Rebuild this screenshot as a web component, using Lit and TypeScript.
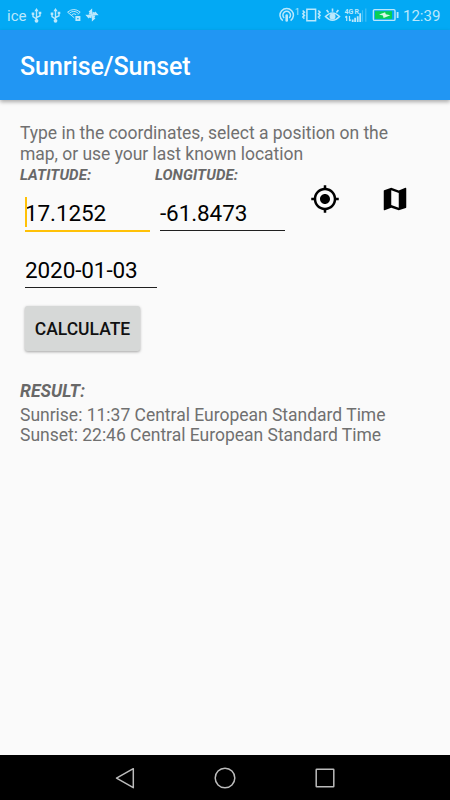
import { LitElement, html, css, svg } from "lit";
import { customElement, property, state } from "lit/decorators.js";
import { classMap } from "lit/directives/class-map.js";

const usb = svg`<svg class="usb" width="11" height="15" viewBox="0 0 11 15" fill="none" stroke="currentColor" stroke-width="1.4">
  <path d="M5.5 2.5V12M5.5 11L2 8.6V6M5.5 9.5L9 7.8V5.2"/>
  <path d="M5.5 0L7.6 3.3H3.4zM.7 4.6h2.6v2.3H.7zM7.7 3.8h2.6v2.3H7.7z" fill="currentColor" stroke="none"/>
  <circle cx="5.5" cy="12.8" r="1.9" fill="currentColor" stroke="none"/></svg>`;

@customElement("status-bar")
export class StatusBar extends LitElement {
  static styles = css`
    :host { display: flex; justify-content: space-between; align-items: center; height: 30px; box-sizing: border-box;
      padding: 0 10.5px 0 7px; background: #03a9f4; color: #bae8fc; font: 15px/30px Roboto, sans-serif; }
    .side { display: flex; align-items: center; height: 30px; }
    svg { display: block; flex: none; }
    .carrier { font-size: 15px; width: 24px; padding-top: 2px; }
    .usb { margin-right: 8px; }
    .wifi { margin-right: 4px; margin-left: -2px; }
    .clock { width: 36.5px; padding-top: 2px; white-space: nowrap; }
    .tiny { font: 700 7px "Roboto", sans-serif; fill: currentColor; }
    .one { font: 9px "Roboto", sans-serif; fill: currentColor; }
  `;
  render() {
    return html`
      <div class="side">
        <span class="carrier">ice</span>${usb}${usb}
        <svg class="wifi" width="14" height="14" viewBox="0 0 14 14" fill="none" stroke="currentColor">
          <path d="M.6 4.2Q6.8-1.2 13.2 4.2L10.7 6.5M.6 4.2L7.3 9.8M2.7 5Q6.8 1.8 11 5M4.6 6.8Q7 4.7 9.2 6.6"/>
          <path d="M9.3 9h3.2v3.2H9.3z" stroke-width="1.8"/>
        </svg>
        <svg width="14" height="14" viewBox="0 0 14 14" fill="currentColor">
          <path d="M7 7L3.6 3.6 7.2.4zM7 7l3.4-3.4 3.2 3.6zM7 7l3.4 3.4-3.6 3.2zM7 7l-3.4 3.4L.4 6.8z"/>
          <path d="M7 7L3.4 6.4 7 .6zM7 7l.6-3.6L13.4 7zM7 7l3.6.6L7 13.4zM7 7l-.6 3.6L.6 7z"/>
        </svg>
      </div>
      <div class="side">
        <svg width="88" height="20" viewBox="0 0 88 20" fill="none" stroke="currentColor" stroke-width="1.5">
          <path d="M3.8 15.6A6.7 6.7 0 1 1 11.6 15.6M5.2 13A3.8 3.8 0 1 1 10.2 13"/>
          <path d="M7.7 10.5v5" stroke-width="2.6" stroke-linecap="round"/>
          <text class="one" x="15.8" y="9.8" stroke="none">1</text>
          <path d="M27.9 4.3h8.7v11.4h-8.7z"/>
          <path d="M23.7 5.5l1.7 1.7-1.5 1.6 1.5 1.6-1.5 1.6 1.5 1.6M39.3 5.5L41 7.2l-1.5 1.6 1.5 1.6-1.5 1.6 1.5 1.6" stroke-width="1.6"/>
          <path d="M46.5 11.5Q53.5 4.5 60.5 11.5 53.5 19 46.5 11.5zM47.6 5l2 2.6M53.5 3.6v3.2M59.4 5L57.4 7.6" stroke-width="1.6"/>
          <circle cx="53.5" cy="11.5" r="3" fill="currentColor" stroke="none"/>
          <text class="tiny" x="65.5" y="8.6" stroke="none">4G</text>
          <text class="tiny" x="75.5" y="8.6" stroke="none">R</text>
          <path d="M67.7 11v5M66.3 12.5L67.7 11M70.5 11v5M71.9 14.6L70.5 16" stroke-width="1.2"/>
          <path d="M72.8 14.5h1.8V17h-1.8zM75.2 12.8h1.8V17h-1.8zM77.8 11.2h1.8V17h-1.8zM80.3 8.2h1.8V17h-1.8z" fill="currentColor" stroke="none"/>
          <path d="M83.5 5.2v11.5M86.8 3.4v13.3" opacity=".35" stroke-width="1.2"/>
        </svg>
        <svg width="36" height="14" viewBox="0 0 36 14">
          <rect x="6.4" y="1.6" width="21.6" height="10.8" rx="1.2" fill="none" stroke="currentColor" stroke-width="1.4"/>
          <path d="M8 3.2h17v7.6H8z" fill="#08cf55"/>
          <path d="M30.6 4v6" stroke="currentColor" stroke-width="1.8"/>
          <path d="M12.1 6.5L18.1 4.2l.7 2.1 4.6.9-6.8 2.8-.7-2.4z" fill="#d8f8e5"/>
        </svg>
        <span class="clock">12:39</span>
      </div>`;
  }
}

@customElement("coord-field")
export class CoordField extends LitElement {
  @property() value = "";
  @property({ type: Boolean }) active = false;
  static styles = css`
    :host { display: block; color: #000; font: 22.5px/30px Roboto, sans-serif; letter-spacing: -.1px; }
    .field { position: relative; height: 33px; box-sizing: border-box; padding-top: 1px; white-space: nowrap; }
    .line { height: 1px; background: #202020; }
    .active .line { height: 2px; background: #ffc107; }
    .caret { position: absolute; left: 0; top: 0; width: 2px; height: 30px; background: #ffc107; }
  `;
  render() {
    return html`<div class=${classMap({ active: this.active })}>
      <div class="field">${this.value}${this.active ? html`<span class="caret"></span>` : ""}</div>
      <div class="line"></div>
    </div>`;
  }
}

@customElement("app-root")
export class AppRoot extends LitElement {
  @state() private latitude = "17.1252";
  @state() private longitude = "-61.8473";
  @state() private date = "2020-01-03";

  static styles = css`
    :host { display: flex; flex-direction: column; height: 800px; background: #fafafa; color: #707070;
      font: 17.5px/20.5px Roboto, sans-serif; overflow: hidden; }
    header { height: 70px; flex: none; box-sizing: border-box; padding: 4px 20px 0; background: #2196f3; color: #fff;
      font-size: 25px; font-weight: 500; line-height: 66px; letter-spacing: -.08px; box-shadow: 0 2px 4px rgba(0, 0, 0, .32); z-index: 1; }
    main { flex: 1; padding: 23px 20px 0; }
    p { margin: 0; white-space: nowrap; letter-spacing: -.03px; }
    .coords { display: grid; grid-template-columns: 135px 135px 70px 70px; height: 68px; margin-top: 2px; }
    .label { font-size: 15px; line-height: 18px; font-weight: 700; font-style: italic; margin-bottom: 13px; letter-spacing: .09px; color: #686868; }
    .coords coord-field { width: 125px; margin-left: 5px; }
    .icon { display: block; width: 30px; height: 30px; justify-self: center; margin-top: 18px; fill: #000; }
    .date { width: 132px; margin: 20px 0 0 5px; }
    button { display: block; margin: 18px 0 0 5px; width: 115px; height: 45px; padding: 0; border: 0; border-radius: 2.5px;
      background: #d6d8d7; color: #111; font: 500 17.5px/20px Roboto, sans-serif; white-space: nowrap;
      box-shadow: 0 1px 3px rgba(0, 0, 0, .35); }
    .result { margin-top: 30px; font-weight: 700; font-style: italic; letter-spacing: .06px; color: #686868; }
    .times { margin-top: 3px; letter-spacing: -.01px; }
    nav { height: 45px; flex: none; background: #000; display: flex; justify-content: center; align-items: center; gap: 76px; }
    nav svg { width: 24px; height: 24px; fill: none; stroke: #bcbcbc; stroke-width: 1.5; }
  `;

  render() {
    return html`
      <status-bar></status-bar>
      <header>Sunrise/Sunset</header>
      <main>
        <p>Type in the coordinates, select a position on the<br />map, or use your last known location</p>
        <div class="coords">
          <div><div class="label">LATITUDE:</div><coord-field active .value=${this.latitude}></coord-field></div>
          <div><div class="label">LONGITUDE:</div><coord-field .value=${this.longitude}></coord-field></div>
          <svg class="icon" viewBox="0 0 24 24"><path d="M12 8c-2.21 0-4 1.79-4 4s1.79 4 4 4 4-1.79 4-4-1.79-4-4-4zm8.94 3c-.46-4.17-3.77-7.48-7.94-7.94V1h-2v2.06C6.83 3.52 3.52 6.83 3.06 11H1v2h2.06c.46 4.17 3.77 7.48 7.94 7.94V23h2v-2.06c4.17-.46 7.48-3.77 7.94-7.94H23v-2h-2.06zM12 19c-3.87 0-7-3.13-7-7s3.13-7 7-7 7 3.13 7 7-3.13 7-7 7z"/></svg>
          <svg class="icon" viewBox="0 0 24 24"><path d="M20.5 3l-.16.03L15 5.1 9 3 3.36 4.9c-.21.07-.36.25-.36.48V20.5c0 .28.22.5.5.5l.16-.03L9 18.9l6 2.1 5.64-1.9c.21-.07.36-.25.36-.48V3.5c0-.28-.22-.5-.5-.5zM15 19l-6-2.11V5l6 2.11V19z"/></svg>
        </div>
        <coord-field class="date" .value=${this.date}></coord-field>
        <button>CALCULATE</button>
        <p class="result">RESULT:</p>
        <p class="times">Sunrise: 11:37 Central European Standard Time<br />Sunset: 22:46 Central European Standard Time</p>
      </main>
      <nav>
        <svg viewBox="0 0 24 24"><path d="M20.3 2.7V21.7L3.5 12.2z" stroke-linejoin="round"/></svg>
        <svg viewBox="0 0 24 24"><circle cx="12" cy="12" r="9.8"/></svg>
        <svg viewBox="0 0 24 24"><rect x="3.2" y="3.2" width="17.6" height="17.6" rx=".5"/></svg>
      </nav>`;
  }
}
